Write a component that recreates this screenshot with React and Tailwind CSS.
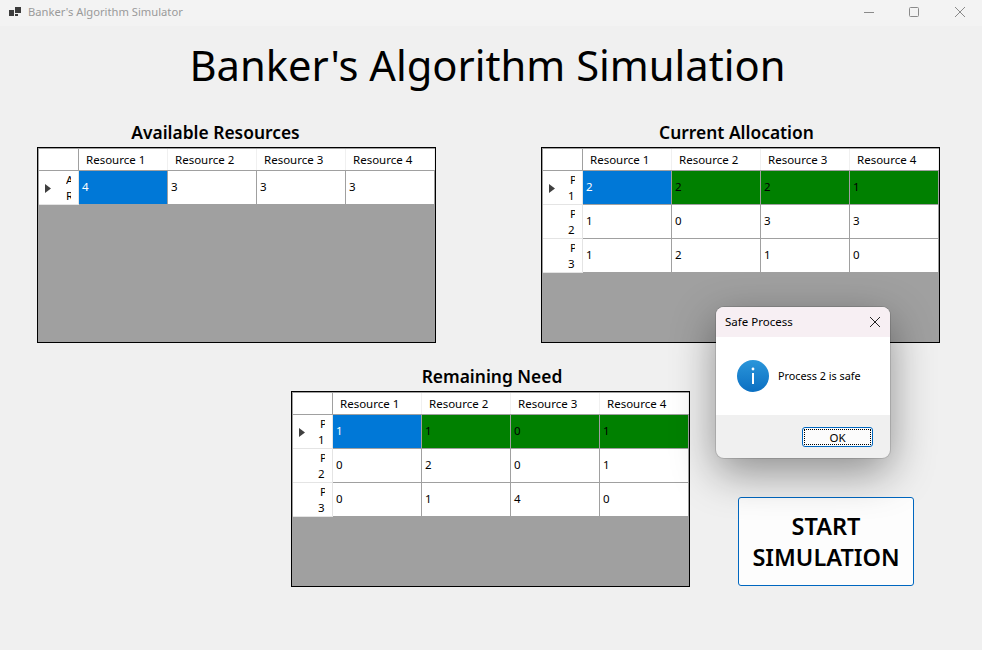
import React from "react";

const font = { fontFamily: '"Noto Sans", "Open Sans", sans-serif' };

function Grid({ label, labelClass, rows, highlight }) {
  return (
    <div className="w-[399px] flex flex-col items-center">
      <div className={`w-full text-center h-[24px] text-[17.4px] leading-[18px] font-semibold text-black whitespace-nowrap ${labelClass}`}>{label}</div>
      <div className="w-[399px] h-[196px] border border-black bg-[#a0a0a0] pt-px pl-px">
        <div className="flex h-[22px] border-b border-[#a0a0a0] bg-white">
          <div className="w-[40px] border-r border-[#a0a0a0] shrink-0" />
          {[1, 2, 3, 4].map((n) => (
            <div key={n} className="w-[89px] shrink-0 border-r border-[#f0f0f0] pl-[7px] text-[11.5px] leading-[21px] text-black whitespace-nowrap">
              Resource {n}
            </div>
          ))}
        </div>
        {rows.map((r, i) => (
          <div key={i} className="flex h-[34px]">
            <div className="relative w-[40px] shrink-0 bg-white border-b border-r border-[#e4e4e4] flex flex-col items-end pr-[7px] text-[11.5px] leading-[16px] text-black">
              {i === 0 && (
                <svg className="absolute left-[6px] top-[13px]" width="6" height="9" viewBox="0 0 6 9">
                  <path d="M0 0 L6 4.5 L0 9 Z" fill="#404040" />
                </svg>
              )}
              <span className="w-[5px] h-[16px] overflow-hidden mt-px">{r.head[0]}</span>
              <span className={`h-[16px] ${/\d/.test(r.head[1]) ? "w-[7px]" : "w-[5px] overflow-hidden"}`}>{r.head[1]}</span>
            </div>
            {r.vals.map((v, j) => {
              const bg = j === 0 && i === 0 ? "bg-[#0078d7] text-white" : highlight && i === 0 ? "bg-[#008000] text-black" : "bg-white text-black";
              return (
                <div key={j} className={`w-[89px] shrink-0 border-r border-b border-[#a0a0a0] pl-[3px] text-[11.5px] leading-[32px] ${bg}`}>
                  {v}
                </div>
              );
            })}
          </div>
        ))}
      </div>
    </div>
  );
}

export default function App() {
  return (
    <div className="relative w-[982px] h-[650px] overflow-hidden bg-[#f0f0f0]" style={font}>
      <div className="h-[26px] bg-[#f3f3f3] flex items-center pb-[2px]">
        <svg className="ml-[9px]" width="13" height="12" viewBox="0 0 13 12">
          <rect x="0" y="4" width="5" height="6" fill="#3c3c3c" />
          <rect x="6" y="1" width="6" height="6" fill="#3c3c3c" />
          <rect x="6" y="8" width="3" height="2" fill="#3c3c3c" />
        </svg>
        <span className="ml-[6px] text-[11.2px] text-[#9a9a9a]">Banker's Algorithm Simulator</span>
        <div className="ml-auto flex items-center">
          <svg width="12" height="12" viewBox="0 0 12 12" className="mr-[33px]"><path d="M1 6.5H11" stroke="#8a8a8a" /></svg>
          <svg width="12" height="12" viewBox="0 0 12 12" className="mr-[34px]"><rect x="1.5" y="1.5" width="9" height="9" rx="1" fill="none" stroke="#8a8a8a" /></svg>
          <svg width="12" height="12" viewBox="0 0 12 12" className="mr-[16px]"><path d="M1 1L11 11M11 1L1 11" stroke="#8a8a8a" /></svg>
        </div>
      </div>

      <div className="h-[97px] pt-[4px] pr-[7px] text-center text-[41.7px] leading-[70px] text-black">Banker's Algorithm Simulation</div>

      <div className="flex justify-between pl-[37px] pr-[42px]">
        <Grid label="Available Resources" labelClass="pr-[42px]" highlight={false} rows={[{ head: ["A", "R"], vals: [4, 3, 3, 3] }]} />
        <Grid
          label="Current Allocation"
          labelClass="pr-[8px]"
          highlight
          rows={[
            { head: ["P", "1"], vals: [2, 2, 2, 1] },
            { head: ["P", "2"], vals: [1, 0, 3, 3] },
            { head: ["P", "3"], vals: [1, 2, 1, 0] },
          ]}
        />
      </div>

      <div className="flex items-end mt-[24px] pl-[291px]">
        <Grid
          label="Remaining Need"
          labelClass="pl-[3px]"
          highlight
          rows={[
            { head: ["P", "1"], vals: [1, 1, 0, 1] },
            { head: ["P", "2"], vals: [0, 2, 0, 1] },
            { head: ["P", "3"], vals: [0, 1, 4, 0] },
          ]}
        />
        <button className="ml-[48px] mb-px w-[176px] h-[89px] rounded-[3px] border border-[#0067c0] bg-[#fdfdfd] text-[23.5px] leading-[31px] font-semibold text-black">
          START
          <br />
          SIMULATION
        </button>
      </div>

      <div className="absolute left-[716px] top-[307px] w-[174px] h-[151px] rounded-[8px] overflow-hidden bg-[#f0f0f0] shadow-[0_0_0_1px_rgba(0,0,0,0.12),0_14px_44px_rgba(0,0,0,0.42)] flex flex-col">
        <div className="h-[30px] bg-[#f7eff3] flex items-center justify-between pl-[9px] pr-[9px] pb-[1px] text-[11.5px] text-black">
          <span>Safe Process</span>
          <svg width="12" height="12" viewBox="0 0 12 12"><path d="M1 1L11 11M11 1L1 11" stroke="#222" /></svg>
        </div>
        <div className="h-[78px] bg-white flex items-center pl-[21px]">
          <div className="w-[32px] h-[32px] rounded-full bg-gradient-to-b from-[#2a96da] to-[#0a6fc2] flex items-center justify-center">
            <svg width="4" height="18" viewBox="0 0 4 18">
              <circle cx="2" cy="2" r="1.4" fill="#fff" />
              <rect x="1" y="6" width="2" height="11" fill="#fff" />
            </svg>
          </div>
          <span className="ml-[9px] text-[10.8px] text-black">Process 2 is safe</span>
        </div>
        <div className="flex justify-end pt-[12px] pr-[17px]">
          <div className="w-[71px] h-[20px] rounded-[3px] border border-[#0067c0] bg-[#fcfcfc] p-px">
            <div className="w-full h-full border border-dotted border-black text-center text-[11.5px] leading-[16px] text-black">OK</div>
          </div>
        </div>
      </div>
    </div>
  );
}
